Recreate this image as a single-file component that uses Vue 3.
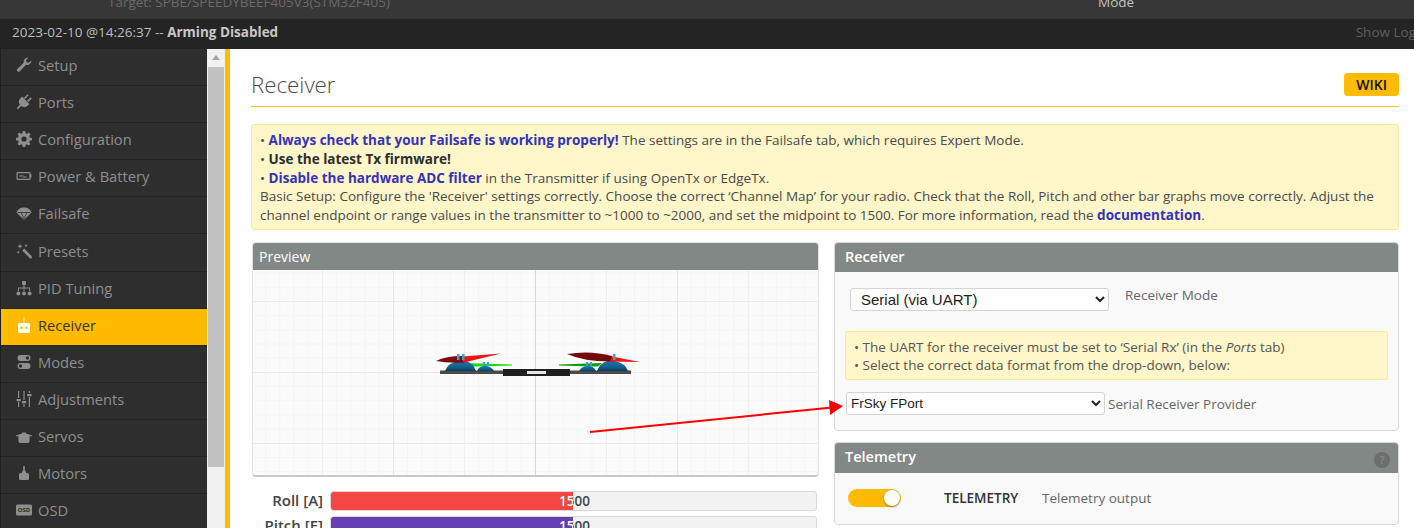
<template>
  <div class="app">
    <div class="top-bar">
      <span class="target">Target: SPBE/SPEEDYBEEF405V3(STM32F405)</span>
      <span class="mode">Mode</span>
    </div>
    <div class="status-bar">
      <span>2023-02-10 @14:26:37 -- <strong>Arming Disabled</strong></span>
      <span class="show-log">Show Log</span>
    </div>

    <div class="main">
      <nav class="sidebar">
        <a v-for="item in menu" :key="item.name" class="menu-item" :class="{ active: item.name === 'Receiver' }">
          <svg class="menu-icon" viewBox="0 0 16 16" v-html="item.icon"></svg>
          <span>{{ item.name }}</span>
        </a>
      </nav>

      <div class="scrollbar">
        <div class="scroll-arrow"></div>
        <div class="scroll-thumb"></div>
      </div>

      <main class="content">
        <div class="title-row">
          <h1>Receiver</h1>
          <span class="wiki">WIKI</span>
        </div>

        <div class="note">
          <p>• <b class="blue">Always check that your Failsafe is working properly!</b> The settings are in the Failsafe tab, which requires Expert Mode.</p>
          <p>• <b>Use the latest Tx firmware!</b></p>
          <p>• <b class="blue">Disable the hardware ADC filter</b> in the Transmitter if using OpenTx or EdgeTx.</p>
          <p>Basic Setup: Configure the 'Receiver' settings correctly. Choose the correct ‘Channel Map’ for your radio. Check that the Roll, Pitch and other bar graphs move correctly. Adjust the channel endpoint or range values in the transmitter to ~1000 to ~2000, and set the midpoint to 1500. For more information, read the <b class="blue">documentation</b>.</p>
        </div>

        <div class="columns">
          <div class="left-col">
            <section class="preview">
              <div class="preview-head">Preview</div>
              <div class="preview-body">
                <svg class="model" viewBox="0 0 260 70" width="260" height="70">
                  <defs>
                    <linearGradient id="motor" x1="0" y1="0" x2="0" y2="1">
                      <stop offset="0" stop-color="#1c78a8" />
                      <stop offset="0.7" stop-color="#115a86" />
                      <stop offset="1" stop-color="#0b3550" />
                    </linearGradient>
                  </defs>
                  <rect x="40" y="40.500" width="191" height="3.500" fill="#4a4a4a" />
                  <rect x="103" y="39" width="67" height="7" fill="#1f1f1f" />
                  <rect x="127" y="41" width="19" height="3" fill="#e4e4e4" />
                  <path d="M64 33 L112 34.500 L112 35.500 L78 36.500 L70 36.500 Z" fill="#0ee00e" />
                  <path d="M202 33 L159 34.500 L159 35.500 L192 36.500 L198 36.500 Z" fill="#0a9c0a" />
                  <path d="M45 41 Q48 33 58 31 H66 Q73 33 76 41Z" fill="url(#motor)" />
                  <path d="M77 41 Q79 36 85 36 Q91 36 94 41Z" fill="url(#motor)" />
                  <path d="M228 41 Q225 33 215 31 H207 Q200 33 197 41Z" fill="url(#motor)" />
                  <path d="M196 41 Q194 36 188 36 Q182 36 179 41Z" fill="url(#motor)" />
                  <path d="M36 31 Q46 26 62 26 L64 32.500 Q48 33.500 36 31Z" fill="#7e0d0d" />
                  <path d="M62 26.500 L101 23.500 L64 32.500 Z" fill="#ee1515" />
                  <path d="M167 24 Q190 20 212 26 L214 31.500 Q185 32 167 24Z" fill="#730a0a" />
                  <path d="M212 26.500 L240 32 L210 31.500 Z" fill="#f01515" />
                  <rect x="57" y="24" width="2.500" height="6" fill="#35a4d8" />
                  <rect x="62" y="24" width="2.500" height="6" fill="#35a4d8" />
                  <rect x="83" y="32" width="2" height="4" fill="#35a4d8" />
                  <rect x="87" y="32" width="2" height="4" fill="#35a4d8" />
                  <rect x="186" y="32" width="2" height="4" fill="#35a4d8" />
                  <rect x="190" y="32" width="2" height="4" fill="#35a4d8" />
                  <rect x="213" y="24" width="2.500" height="6" fill="#35a4d8" />
                </svg>
              </div>
            </section>

            <div class="bars">
              <div v-for="bar in bars" :key="bar.label" class="bar-row">
                <label>{{ bar.label }}</label>
                <div class="meter">
                  <div class="fill" :style="{ background: bar.color }"></div>
                  <span class="value dark">1500</span>
                  <div class="fill-clip">
                    <span class="value">1500</span>
                  </div>
                </div>
              </div>
            </div>
          </div>

          <div class="right-col">
            <section class="box">
              <div class="box-head">Receiver</div>
              <div class="box-body">
                <div class="mode-row">
                  <select class="mode-select">
                    <option>Serial (via UART)</option>
                  </select>
                  <span class="field-label">Receiver Mode</span>
                </div>
                <div class="uart-note">
                  <p>• The UART for the receiver must be set to ‘Serial Rx’ (in the <i>Ports</i> tab)</p>
                  <p>• Select the correct data format from the drop-down, below:</p>
                </div>
                <div class="provider-row">
                  <select class="provider-select">
                    <option>FrSky FPort</option>
                  </select>
                  <span class="field-label">Serial Receiver Provider</span>
                </div>
              </div>
            </section>

            <section class="box">
              <div class="box-head telemetry-head">
                <span>Telemetry</span>
                <span class="help">?</span>
              </div>
              <div class="telemetry-body">
                <span class="switch"><span class="knob"></span></span>
                <b class="telemetry-name">TELEMETRY</b>
                <span class="field-label">Telemetry output</span>
              </div>
            </section>
          </div>
        </div>

        <!-- annotation drawn over the screenshot -->
        <svg class="arrow" width="270" height="50" viewBox="0 0 270 50">
          <line x1="10" y1="44" x2="252" y2="19.500" stroke="#ff0000" stroke-width="2" />
          <path d="M263 18 L249 12 L250 27 Z" fill="#ff0000" />
        </svg>
      </main>
    </div>
  </div>
</template>

<script setup>
const menu = [
  { name: 'Setup', icon: '<path d="M15.500 3.500a4.200 4.200 0 0 1-5.500 4.200L3.800 14.300a1.700 1.700 0 0 1-2.400-2.400l6.300-6.200A4.200 4.200 0 0 1 12.500.700L10 3.200l.5 2 2 .5z"/>' },
  { name: 'Ports', icon: '<g transform="rotate(45 8 8)"><path d="M5 0h1.600v5H5zM9.400 0H11v5H9.400zM2.800 5.500h10.400v2.300a5.200 5.200 0 0 1-4.300 5.100V17.500H7.100v-4.600a5.200 5.200 0 0 1-4.300-5.100z"/></g>' },
  { name: 'Configuration', icon: '<path fill-rule="evenodd" d="M6.800 0h2.400l.4 2.300 1.300.6 2-1.300 1.600 1.600-1.300 2 .6 1.300 2.200.4v2.400l-2.200.4-.6 1.300 1.300 2-1.600 1.600-2-1.300-1.300.6-.4 2.200H6.800l-.4-2.200-1.300-.6-2 1.300-1.600-1.600 1.300-2-.6-1.300L0 9.200V6.800l2.200-.4.6-1.300-1.300-2 1.600-1.600 2 1.300 1.300-.6zM8 5.400a2.600 2.600 0 1 0 0 5.200 2.600 2.600 0 0 0 0-5.200z"/>' },
  { name: 'Power & Battery', icon: '<path fill-rule="evenodd" d="M1.500 4h12a1 1 0 0 1 1 1v1.500h1v3h-1V11a1 1 0 0 1-1 1h-12a1 1 0 0 1-1-1V5a1 1 0 0 1 1-1zm.2 1.200v5.600h11.600V5.200z"/><path d="M3 7.500h3.500l1-1-.5 2h3.500v1H6.500l.5-1.500-.8.5H3z"/>' },
  { name: 'Failsafe', icon: '<path d="M8 2.500c3.500 0 6.700 2 7.500 5L8.500 14.500h-1L.5 7.500C1.300 4.500 4.500 2.500 8 2.500z"/><path d="M1.500 7.500h13M5 7.500l3 6.500 3-6.500" stroke="#2e2e2e" stroke-width=".8" fill="none"/>' },
  { name: 'Presets', icon: '<path d="M6.200 7.500l2-2 7.300 7.400a1.400 1.400 0 0 1-2 2zM4 .5l.7 2 2 .7-2 .7L4 6l-.7-2.100-2-.7 2-.7zM10 1l.5 1.300 1.300.5-1.300.5-.5 1.300-.5-1.300-1.300-.5 1.300-.5zM2.200 7.500l.5 1.300 1.300.5-1.300.5-.5 1.300-.5-1.300-1.300-.5 1.300-.5z"/>' },
  { name: 'PID Tuning', icon: '<rect x="6" y="1" width="4" height="4" rx="1"/><circle cx="2.400" cy="13.400" r="2"/><circle cx="8" cy="13.400" r="2"/><circle cx="13.600" cy="13.400" r="2"/><path d="M7.500 5h1v2.500h5.600v3.500h-1V8.500h-4.600V11h-1V8.500H3v2.500H2V7.500h5.500z"/>' },
  { name: 'Receiver', icon: '<path fill-rule="evenodd" d="M7.600 0h.8v6H12a2 2 0 0 1 2 2v6a2 2 0 0 1-2 2H4a2 2 0 0 1-2-2V8a2 2 0 0 1 2-2h3.600zM5.500 9.500a1.300 1.300 0 1 0 0 2.600 1.300 1.300 0 0 0 0-2.600zm5 0a1.300 1.300 0 1 0 0 2.600 1.300 1.300 0 0 0 0-2.600z"/>' },
  { name: 'Modes', icon: '<path fill-rule="evenodd" d="M4.500 1h7a3 3 0 0 1 0 6h-7a3 3 0 0 1 0-6zm7 1.300a1.700 1.700 0 1 0 0 3.400 1.700 1.700 0 0 0 0-3.400zM4.500 9h7a3 3 0 0 1 0 6h-7a3 3 0 0 1 0-6zm0 1.300a1.700 1.700 0 1 0 0 3.400 1.700 1.700 0 0 0 0-3.400z"/>' },
  { name: 'Adjustments', icon: '<path d="M2 0h1.200v7H2zM2 11h1.200v5H2zM.5 8h4.200v2.200H.5zM7.400 0h1.200v9H7.400zM7.400 13h1.200v3H7.400zM5.900 10h4.200v2.200H5.900zM12.800 0H14v2h-1.200zM12.800 6H14v10h-1.200zM11.300 3h4.200v2.200h-4.200z"/>' },
  { name: 'Servos', icon: '<path d="M0 7.500L6 5.500V4.500h4v1l6 2v.8H13.600V13a2 2 0 0 1-2 2H4.400a2 2 0 0 1-2-2V8.300H0z"/>' },
  { name: 'Motors', icon: '<path d="M7.200 1h1.600v4.500c1 .5 1.400 1.500 1.500 2.500H11.500A1.500 1.500 0 0 1 13 9.500v4A1.500 1.500 0 0 1 11.500 15h-7A1.500 1.500 0 0 1 3 13.500v-4A1.500 1.500 0 0 1 4.500 8h1.200c.1-1 .5-2 1.500-2.500z"/>' },
  { name: 'OSD', icon: '<rect x="0" y="2.500" width="16" height="11" rx="1.500"/><text x="8" y="10.200" text-anchor="middle" font-size="6" font-weight="700" fill="#2e2e2e" font-family="Open Sans, sans-serif">OSD</text>' }
]

const bars = [
  { label: 'Roll [A]', color: '#f44741' },
  { label: 'Pitch [E]', color: '#673fb4' }
]
</script>

<style>
html, body {
  margin: 0;
  overflow: hidden;
}
</style>

<style scoped>
.app {
  width: 1414px;
  height: 528px;
  overflow: hidden;
  font-family: "Open Sans", sans-serif;
  font-size: 13.5px;
  background: #fff;
  display: flex;
  flex-direction: column;
}

/* Header strips */
.top-bar {
  height: 19px;
  flex: none;
  background: #363736;
  position: relative;
  overflow: hidden;
}

.target {
  position: absolute;
  left: 108px;
  top: -7px;
  color: #6a6a6a;
}

.mode {
  position: absolute;
  left: 1098px;
  top: -7px;
  color: #c4c4c4;
}

.status-bar {
  height: 30px;
  flex: none;
  background: #242424;
  color: #bdbdbd;
  display: flex;
  align-items: center;
  justify-content: space-between;
  padding: 0 0 4px 12px;
  white-space: nowrap;
  width: 1416px;
  box-sizing: border-box;
}

.status-bar strong {
  color: #c8c8c8;
}

.show-log {
  color: #5f5f5f;
}

.main {
  flex: 1;
  display: flex;
  min-height: 0;
}

/* Left menu */
.sidebar {
  width: 207px;
  flex: none;
  background: #2e2e2e;
  border-left: 1px solid #1f1f1f;
  box-sizing: border-box;
  color: #8e8e8e;
}

.menu-item {
  height: 37.100px;
  box-sizing: border-box;
  display: flex;
  align-items: center;
  gap: 6px;
  padding: 0 0 4px 15px;
  font-size: 14.700px;
  border-bottom: 1px solid #232323;
}

.menu-item.active {
  background: #ffbb00;
  color: #3d3418;
}

.menu-icon {
  width: 16px;
  height: 16px;
  fill: #8e8e8e;
  flex: none;
}

.menu-item.active .menu-icon {
  fill: #fff;
}

/* Fake window scrollbar */
.scrollbar {
  width: 18px;
  flex: none;
  background: #f1f1f1;
  box-sizing: border-box;
  padding: 0 1px;
}

.scroll-arrow {
  height: 18px;
  position: relative;
}

.scroll-arrow::after {
  content: "";
  position: absolute;
  left: 4px;
  top: 6px;
  border-left: 4px solid transparent;
  border-right: 4px solid transparent;
  border-bottom: 5px solid #a3a3a3;
}

.scroll-thumb {
  height: 400px;
  background: #c1c1c1;
}

/* Tab content */
.content {
  flex: 1;
  min-width: 0;
  border-left: 5px solid #ffbb00;
  padding: 0 15px 0 21px;
  position: relative;
  overflow: hidden;
  color: #444;
}

.title-row {
  height: 58px;
  box-sizing: border-box;
  border-bottom: 1px solid #ffc61f;
  display: flex;
  justify-content: space-between;
  align-items: center;
  padding-top: 13px;
  margin-bottom: 17px;
}

h1 {
  margin: 0;
  font-size: 22.300px;
  font-weight: 300;
  color: #4a4a4a;
}

.wiki {
  background: #ffbb00;
  color: #111;
  font-weight: 600;
  font-size: 14px;
  border-radius: 4px;
  padding: 2px 12px;
  line-height: 19px;
}

.note {
  background: #fff6ca;
  border: 1px solid #fde79a;
  border-radius: 3px;
  padding: 6px 8px 5px;
  line-height: 18.750px;
  color: #4a4a4a;
  height: 106px;
  box-sizing: border-box;
}

.note p {
  margin: 0;
}

.note b {
  color: #2e2e2e;
}

.note b.blue {
  color: #3333bb;
}

.columns {
  display: flex;
  gap: 15px;
  margin-top: 12px;
}

/* Preview column */
.left-col {
  width: 568px;
  flex: none;
}

.preview {
  border-radius: 4px;
  margin-left: 1px;
  height: 235px;
  box-sizing: border-box;
  border: 1px solid #e2e2e2;
  border-bottom: 2px solid #c8c8c8;
  overflow: hidden;
  display: flex;
  flex-direction: column;
}

.preview-head {
  height: 27px;
  flex: none;
  background: #828885;
  color: #fff;
  font-size: 14px;
  line-height: 28px;
  padding-left: 6px;
}

.preview-body {
  flex: 1;
  background-color: #fbfbfb;
  background-image:
    linear-gradient(to right, #d6d6d6 1px, transparent 1px),
    linear-gradient(to right, #e6e6e6 1px, transparent 1px),
    linear-gradient(to right, #efefef 1px, transparent 1px),
    linear-gradient(to bottom, #ebebeb 1px, transparent 1px),
    linear-gradient(to right, #f5f5f5 1px, transparent 1px),
    linear-gradient(to bottom, #f5f5f5 1px, transparent 1px);
  background-size: 100% 100%, 142px 100%, 71px 100%, 100% 71px, 14.200px 100%, 100% 14.200px;
  background-position: 282px 0, 140px 0, 69px 0, 0 31px, 12.200px 0, 0 2.600px;
  background-repeat: no-repeat, repeat, repeat, repeat, repeat, repeat;
  position: relative;
}

.model {
  position: absolute;
  left: 147px;
  top: 60px;
  filter: blur(0.4px);
}

.bars {
  margin-top: 14px;
  display: flex;
  flex-direction: column;
  gap: 5px;
}

.bar-row {
  display: flex;
  align-items: center;
  gap: 7px;
  height: 20px;
}

.bar-row label {
  width: 72px;
  text-align: right;
  font-weight: 600;
  font-size: 15px;
  margin-top: -2px;
  color: #444;
  flex: none;
}

.meter {
  position: relative;
  width: 487px;
  height: 20px;
  box-sizing: border-box;
  background: #f2f2f2;
  border: 1px solid #d8d8d8;
  border-radius: 3px;
  overflow: hidden;
}

.fill {
  position: absolute;
  left: 0;
  top: 0;
  bottom: 0;
  width: 242px;
  border-radius: 2px 0 0 2px;
}

.fill-clip {
  position: absolute;
  left: 0;
  top: 0;
  bottom: 0;
  width: 242px;
  overflow: hidden;
}

.value {
  position: absolute;
  left: 228px;
  top: 0;
  line-height: 18px;
  font-size: 13.500px;
  font-weight: 600;
  color: #fff;
}

.value.dark {
  color: #444;
}

/* Right column boxes */
.right-col {
  flex: 1;
  min-width: 0;
  display: flex;
  flex-direction: column;
  gap: 11px;
}

.box {
  border: 1px solid #d8d8d8;
  border-radius: 4px;
  overflow: hidden;
  background: #f9f9f9;
}

.box-head {
  height: 29px;
  background: #828885;
  color: #fff;
  font-size: 14.500px;
  font-weight: 600;
  line-height: 28px;
  padding-left: 10px;
}

.box-body {
  height: 158px;
  box-sizing: border-box;
  padding: 16px 10px 0;
}

.mode-row {
  display: flex;
  align-items: flex-start;
  padding-left: 5px;
  gap: 16px;
}

select {
  font-family: "Liberation Sans", Arial, sans-serif;
  background: #fff;
  border: 1px solid #d4d4d4;
  border-radius: 3px;
  color: #222;
  box-sizing: border-box;
}

.mode-select {
  width: 259px;
  height: 23px;
  font-size: 15px;
  padding-left: 6px;
}

.field-label {
  color: #666;
}

.mode-row .field-label {
  margin-top: -2px;
}

.uart-note {
  margin-top: 20px;
  height: 49px;
  box-sizing: border-box;
  background: #fff6ca;
  border: 1px solid #fde79a;
  border-radius: 2px;
  padding: 6px 8px;
  line-height: 18px;
  color: #555;
}

.uart-note p {
  margin: 0;
}

.provider-row {
  margin-top: 12px;
  display: flex;
  align-items: center;
  gap: 3px;
}

.provider-select {
  width: 259px;
  height: 23px;
  font-size: 13.500px;
  padding-left: 0;
  margin-left: 1px;
}

.telemetry-head {
  display: flex;
  justify-content: space-between;
  align-items: center;
  padding-right: 8px;
  padding-bottom: 2px;
  height: 30px;
  box-sizing: border-box;
}

.help {
  width: 16px;
  height: 16px;
  border-radius: 50%;
  background: #6a6f6d;
  color: #828885;
  font-size: 11px;
  font-weight: 700;
  line-height: 16px;
  text-align: center;
  margin-top: 5px;
}

.telemetry-body {
  height: 51px;
  display: flex;
  align-items: center;
  padding: 0 0 2px 13px;
  box-sizing: border-box;
}

.switch {
  width: 53px;
  height: 18px;
  border-radius: 9px;
  background: #ffbb00;
  position: relative;
  flex: none;
}

.knob {
  position: absolute;
  right: 1px;
  top: 1px;
  width: 16px;
  height: 16px;
  border-radius: 50%;
  background: #fff;
  box-shadow: 0 1px 2px rgba(0, 0, 0, 0.4);
}

.telemetry-name {
  margin-left: 43px;
  width: 98px;
  font-weight: 600;
  color: #333;
}

.arrow {
  position: absolute;
  left: 350px;
  top: 339px;
}
</style>
